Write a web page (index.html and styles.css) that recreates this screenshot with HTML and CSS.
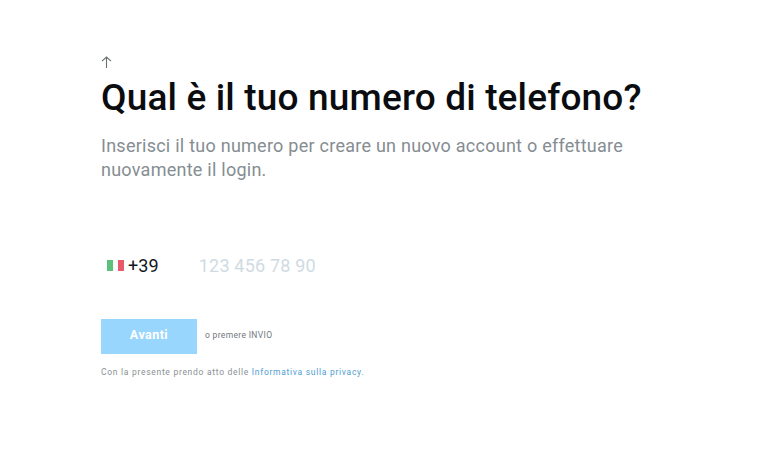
FILE: index.html
```html
<!DOCTYPE html>
<html lang="it">
<head>
<meta charset="utf-8">
<title>Numero di telefono</title>
<link rel="stylesheet" href="styles.css">
</head>
<body>
<main class="page">
  <button class="back" type="button" aria-label="Indietro">
    <svg width="11" height="12" viewBox="0 0 11 12" fill="none" stroke="#6a6f72" stroke-width="1.1"><path d="M5.5 12V1M1 5.2 5.5 1 10 5.2"/></svg>
  </button>
  <h1 class="title">Qual è il tuo numero di telefono?</h1>
  <p class="subtitle">Inserisci il tuo numero per creare un nuovo account o effettuare nuovamente il login.</p>
  <div class="phone">
    <span class="flag"><i class="green"></i><i class="white"></i><i class="red"></i></span>
    <span class="prefix">+39</span>
    <span class="placeholder">123 456 78 90</span>
  </div>
  <div class="actions">
    <button class="next" type="button">Avanti</button>
    <span class="hint">o premere INVIO</span>
  </div>
  <p class="legal">Con la presente prendo atto delle <a href="#">Informativa sulla privacy</a>.</p>
</main>
</body>
</html>
```
FILE: styles.css
```css
html, body { margin: 0; padding: 0; background: #fff; }
body { font-family: Roboto, "Noto Sans", sans-serif; }
.page { width: 560px; padding: 56px 0 0 101px; }
.back { display: block; height: 12px; padding: 0; border: 0; background: none; }
.back svg { display: block; }
.title { margin: 9px 0 0; font-size: 37px; line-height: 42px; font-weight: 500; color: #0a0c10; letter-spacing: 0.16px; white-space: nowrap; }
.subtitle { width: 540px; margin: 15px 0 0; font-size: 18px; line-height: 24px; color: #858d92; letter-spacing: 0.25px; }
.phone { display: flex; align-items: center; height: 24px; margin-top: 71px; padding-left: 6px; }
.flag { display: flex; width: 17px; height: 11px; }
.flag i { flex: 1; }
.green { background: #5cc07c; }
.white { background: #fbfbfb; }
.red { background: #e8596c; }
.prefix { margin-left: 4px; font-size: 18px; color: #14171a; letter-spacing: 0.1px; }
.placeholder { margin-left: 40px; font-size: 18px; color: #cfdbe3; letter-spacing: 0.2px; }
.actions { display: flex; align-items: center; margin-top: 42px; }
.next { width: 96px; height: 35px; padding: 0 0 5px; border: 0; background: #99d6fe; color: #fff; font: 700 12.5px Roboto, sans-serif; letter-spacing: 0.45px; }
.hint { margin-left: 8px; padding-bottom: 4px; font-size: 8.5px; color: #70777c; letter-spacing: 0.33px; }
.legal { margin: 10px 0 0; font-size: 8.5px; line-height: 16px; color: #8a9094; letter-spacing: 0.71px; }
.legal a { color: #4f9ed2; text-decoration: none; }
```
